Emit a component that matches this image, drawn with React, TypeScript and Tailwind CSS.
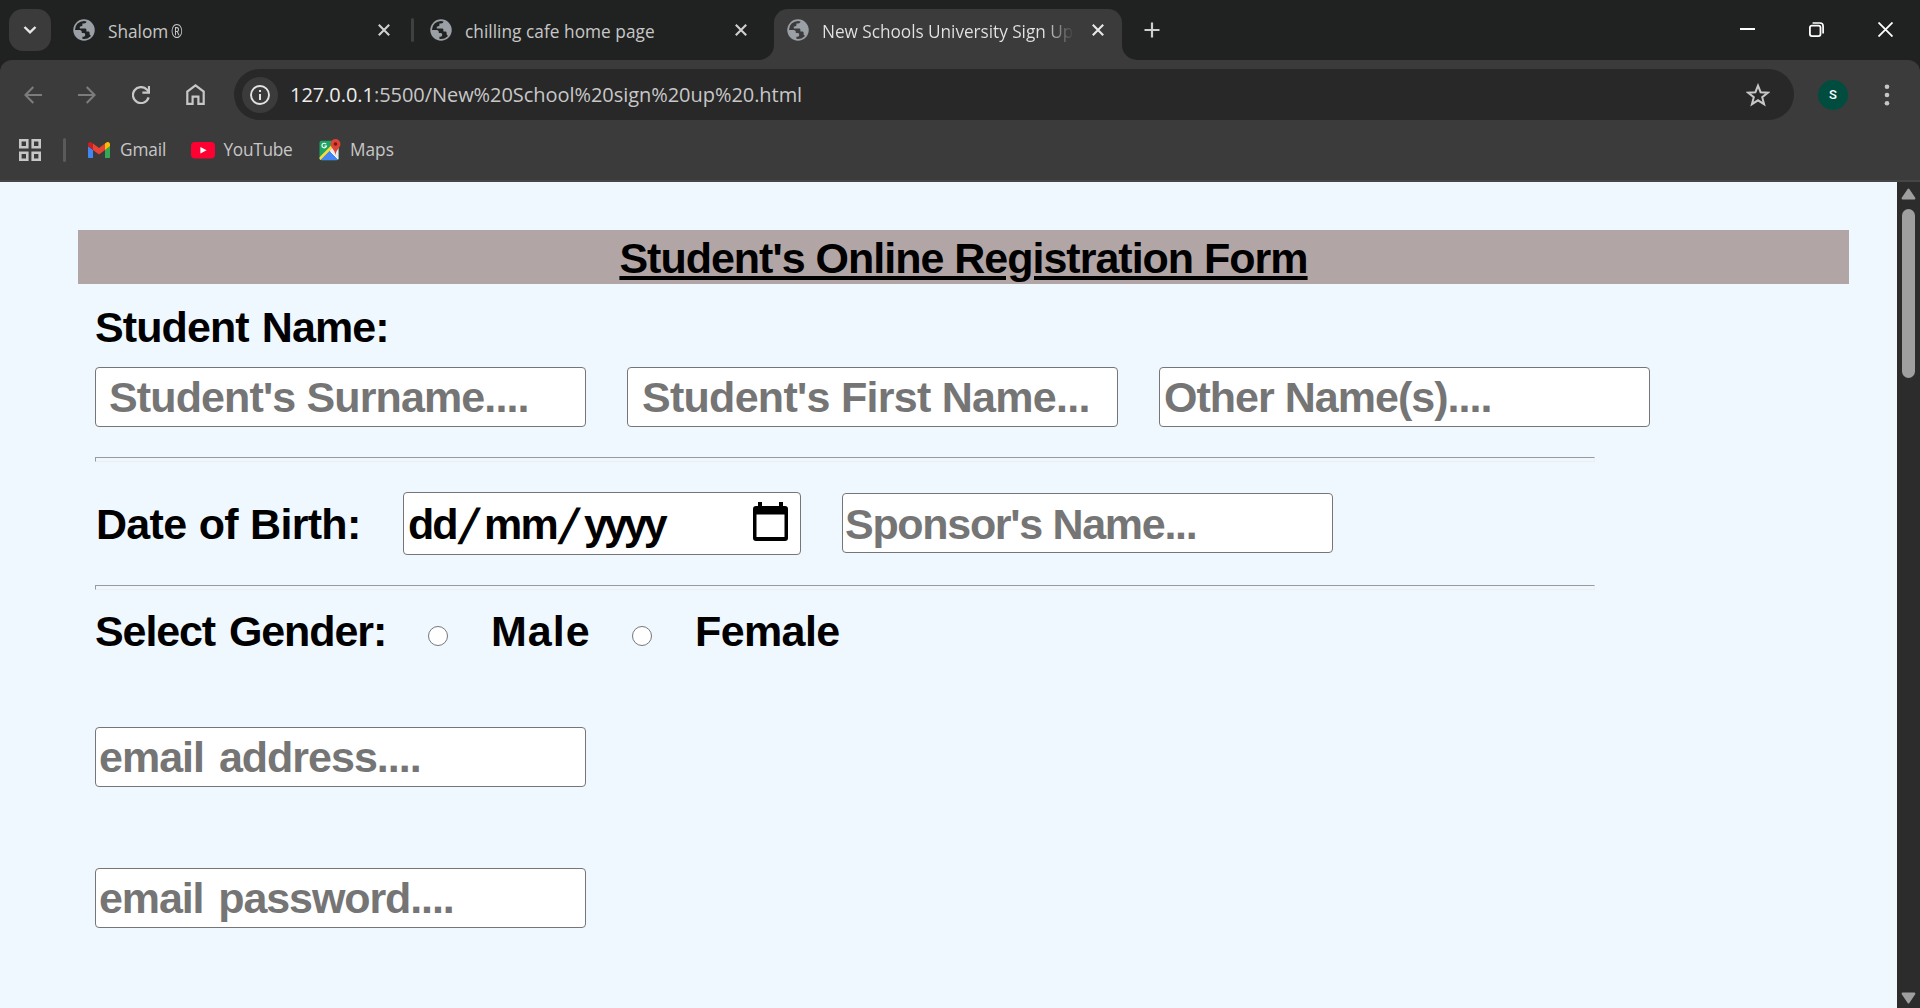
import type { ReactNode } from "react";

const FORM_FONT = "font-['Liberation_Sans',Arial,sans-serif] font-bold text-[43px]";
const INPUT =
  "block h-[60px] w-[491px] shrink-0 rounded-[4px] border border-[#767676] bg-white p-0 outline-none placeholder:text-[#757575] placeholder:opacity-100 " +
  FORM_FONT;

function Globe() {
  return (
    <svg viewBox="0 0 22 22" className="size-[22px] shrink-0">
      <circle cx="11" cy="11" r="9.9" fill="none" stroke="#9aa0a6" strokeWidth="1.7" />
      <path
        fill="#9aa0a6"
        d="M13.6 1.6C13.8 3.6 12.6 4.4 11 4.4H9.4V6.2C9.4 7 8.8 7.4 8 7.4H6.8V9.4H12C13 9.4 13.4 10 13.4 10.8V12.6H15.2C16.2 12.6 16.6 13.2 16.6 14V15.6L18.6 17.4C20.2 15.6 20.9 13.4 20.9 11C20.9 6.4 17.8 2.6 13.6 1.6Z"
      />
      <path fill="#9aa0a6" d="M1.2 11H6.6C8.2 11 8.8 12 8.8 13.2V14H10.6C11.8 14 12.2 14.8 12.2 15.8C12.2 17.2 11.4 17.8 10 17.8H9.4V20.6C4.6 20 1.2 15.8 1.2 11Z" />
    </svg>
  );
}

function CloseGlyph({ color = "#d0d0d0" }: { color?: string }) {
  return (
    <svg viewBox="0 0 12 12" className="size-[12px] shrink-0">
      <path d="M0.8 0.8L11.2 11.2M11.2 0.8L0.8 11.2" stroke={color} strokeWidth="2.1" />
    </svg>
  );
}

function TabStrip() {
  return (
    <div className="flex h-[60px] items-start bg-[#202221] pl-[9px]">
      <button className="mt-[9px] flex size-[42px] shrink-0 items-center justify-center rounded-[14px] bg-[#3b3b3b]">
        <svg viewBox="0 0 14 10" className="h-[10px] w-[14px]">
          <path d="M1.5 2L7 7.4L12.5 2" fill="none" stroke="#e8e8e8" strokeWidth="2.4" />
        </svg>
      </button>

      <div className="mt-[9px] flex h-[42px] w-[363px] items-center pl-[22px]">
        <Globe />
        <span className="ml-[13px] flex-1 pt-[3px] text-[17.25px] text-[#c7c7c7]">
          Shalom<span className="ml-[3px] inline-block w-[11px] origin-left scale-x-[.82]">®</span>
        </span>
        <CloseGlyph />
        <span className="ml-[21px] h-[24px] w-[3px] rounded-sm bg-[#3f4040]" />
      </div>

      <div className="mt-[9px] flex h-[42px] w-[360px] items-center pl-[16px]">
        <Globe />
        <span className="ml-[13px] flex-1 pt-[3px] text-[17.25px] tracking-[0.04px] text-[#c7c7c7]">chilling cafe home page</span>
        <CloseGlyph />
        <span className="w-[27px]" />
      </div>

      <div className="relative mt-[9px] h-[51px] w-[348px] shrink-0 rounded-t-[14px] bg-[#3b3b3b]">
        <svg viewBox="0 0 15 15" className="absolute bottom-0 -left-[15px] size-[15px]">
          <path d="M15 0V15H0A15 15 0 0 0 15 0Z" fill="#3b3b3b" />
        </svg>
        <svg viewBox="0 0 15 15" className="absolute -right-[15px] bottom-0 size-[15px]">
          <path d="M0 0V15H15A15 15 0 0 1 0 0Z" fill="#3b3b3b" />
        </svg>
        <div className="flex h-[42px] items-center pl-[13px]">
          <Globe />
          <span className="ml-[13px] w-[252px] overflow-hidden bg-linear-to-r from-[#e3e3e3] from-[88%] to-transparent bg-clip-text pt-[3px] text-[17.25px] tracking-[-0.05px] whitespace-nowrap text-transparent">
            New Schools University Sign Up
          </span>
          <span className="ml-[18px] flex">
            <CloseGlyph color="#e8e8e8" />
          </span>
        </div>
      </div>

      <svg viewBox="0 0 16 16" className="mt-[22px] ml-[22px] size-[16px] shrink-0">
        <path d="M8 0.5V15.5M0.5 8H15.5" stroke="#cfcfcf" strokeWidth="2.2" />
      </svg>

      <div className="mt-[22px] mr-[27px] ml-auto flex gap-[54px]">
        <svg viewBox="0 0 15 15" className="size-[15px]">
          <path d="M0 7H15" stroke="#fff" strokeWidth="2" />
        </svg>
        <svg viewBox="0 0 15 15" className="size-[15px]">
          <rect x="0.9" y="3.6" width="10.6" height="10.5" rx="2" fill="none" stroke="#fff" strokeWidth="1.8" />
          <path d="M3.6 1H11A3.2 3.2 0 0 1 14.1 4.2V11.4" fill="none" stroke="#fff" strokeWidth="1.7" />
        </svg>
        <svg viewBox="0 0 15 15" className="size-[15px]">
          <path d="M0.5 0.5L14.5 14.5M14.5 0.5L0.5 14.5" stroke="#fff" strokeWidth="1.8" />
        </svg>
      </div>
    </div>
  );
}

function AddressBar() {
  return (
    <div className="flex h-[69px] items-center pl-[24px]">
      <svg viewBox="0 0 18 18" className="size-[18px]" fill="none" stroke="#7c7c7c" strokeWidth="2.1">
        <path d="M18 9H1.6M9.3 0.9L1.4 9L9.3 17.1" />
      </svg>
      <svg viewBox="0 0 18 18" className="ml-[36px] size-[18px]" fill="none" stroke="#7c7c7c" strokeWidth="2.1">
        <path d="M0 9H16.4M8.7 0.9L16.6 9L8.7 17.1" />
      </svg>
      <svg viewBox="0 0 18 18" className="ml-[36px] size-[18px]" fill="none" stroke="#c7c7c7" strokeWidth="2.2">
        <path d="M16.6 11.4A8 8 0 1 1 14.8 3.6L16.6 5.6" />
        <path d="M17 0V6.6H10.4" />
      </svg>
      <svg viewBox="0 0 19 21" className="ml-[35.5px] h-[21px] w-[19px]" fill="none" stroke="#c7c7c7" strokeWidth="2.2">
        <path d="M1.3 19.8V7.6L9.5 1.4L17.7 7.6V19.8H12.4V12.6H6.6V19.8Z" />
      </svg>

      <div className="ml-[29.5px] flex h-[51px] w-[1560px] items-center rounded-full bg-[#282828] pl-[8px]">
        <span className="flex size-[36px] items-center justify-center rounded-full bg-[#3b3b3b]">
          <svg viewBox="0 0 20 20" className="size-[20px]" fill="none" stroke="#e3e3e3" strokeWidth="1.9">
            <circle cx="10" cy="10" r="9" />
            <path d="M10 9V15M10 5V7.1" strokeWidth="2" />
          </svg>
        </span>
        <span className="ml-[12px] text-[20px] tracking-[-0.05px] whitespace-nowrap text-[#c7c7c7]">
          <span className="text-[#ededed]">127.0.0.1</span>:5500/New%20School%20sign%20up%20.html
        </span>
        <svg viewBox="0 0 24 24" className="mr-[24px] ml-auto size-[24px]">
          <path
            d="M12 2.6L14.6 9.2L21.8 9.7L16.2 14.2L18.1 21.2L12 17.3L5.9 21.2L7.8 14.2L2.2 9.7L9.4 9.2Z"
            fill="none"
            stroke="#c7c7c7"
            strokeWidth="2"
          />
        </svg>
      </div>

      <span className="ml-[24px] flex size-[30px] items-center justify-center rounded-full bg-[#004d40] font-[Roboto,sans-serif] text-[13px] font-medium text-white">
        S
      </span>
      <svg viewBox="0 0 6 22" className="ml-[36px] h-[22px] w-[6px]" fill="#c7c7c7">
        <circle cx="3" cy="2.8" r="2.3" />
        <circle cx="3" cy="11" r="2.3" />
        <circle cx="3" cy="19.2" r="2.3" />
      </svg>
    </div>
  );
}

function BookmarksBar() {
  return (
    <div className="flex h-[42px] items-center pl-[19px] text-[17.25px] text-[#c7c7c7]">
      <svg viewBox="0 0 22 22" className="size-[22px]" fill="none" stroke="#c7c7c7" strokeWidth="2.6">
        <path d="M1.3 1.3H8.3V8.3H1.3ZM13.7 1.3H20.7V8.3H13.7ZM1.3 13.7H8.3V20.7H1.3ZM13.7 13.7H20.7V20.7H13.7Z" />
      </svg>
      <span className="ml-[22px] h-[24px] w-[3px] rounded-sm bg-[#5a5a5a]" />
      <svg viewBox="52 42 88 66" className="ml-[22px] h-[16.5px] w-[22px]">
        <path fill="#4285f4" d="M58 108h14V74L52 59v43c0 3.32 2.69 6 6 6" />
        <path fill="#34a853" d="M120 108h14c3.32 0 6-2.69 6-6V59l-20 15" />
        <path fill="#fbbc04" d="M120 48v26l20-15v-8c0-7.42-8.47-11.65-14.4-7.2" />
        <path fill="#ea4335" d="M72 74V48l24 18 24-18v26L96 92" />
        <path fill="#c5221f" d="M52 51v8l20 15V48l-5.6-4.2c-5.94-4.45-14.4-.22-14.4 7.2" />
      </svg>
      <span className="ml-[10px] w-[46px] tracking-[-0.1px]">Gmail</span>
      <svg viewBox="0 0 24 17" className="ml-[25px] h-[17px] w-[24px] shrink-0">
        <rect width="24" height="16.5" rx="4" fill="#ff0033" />
        <path d="M9.4 5L15.6 8.3L9.4 11.6Z" fill="#fff" />
      </svg>
      <span className="ml-[8.5px] w-[70.5px] tracking-[-0.3px]">YouTube</span>
      <svg viewBox="0 0 22 22" className="ml-[25px] size-[22px] shrink-0">
        <clipPath id="mapTile">
          <rect x="0.5" y="1.8" width="19" height="19.5" rx="2" />
        </clipPath>
        <g clipPath="url(#mapTile)">
          <rect y="1" width="20" height="21" fill="#1da462" />
          <path d="M10.5 11.5L20 21.5H1Z" fill="#4285f4" />
          <path d="M12 10L20 4V21.5L10.5 11.5Z" fill="#e8eaed" />
          <path d="M0 20.5L14.5 6" stroke="#ffd93b" strokeWidth="2.6" />
          <path d="M11.5 12.5L20 21" stroke="#fff" strokeWidth="1" />
        </g>
        <path d="M7.2 5.3A2.3 2.3 0 1 0 7.5 7H5.4" fill="none" stroke="#fff" strokeWidth="1.1" />
        <path d="M16.5 0A4.9 4.9 0 0 0 11.6 5C11.6 9 15.6 10 16.5 16C17.4 10 21.4 9 21.4 5A4.9 4.9 0 0 0 16.5 0Z" fill="#db4437" />
        <circle cx="16.5" cy="5" r="1.8" fill="#811411" />
      </svg>
      <span className="ml-[9px]">Maps</span>
    </div>
  );
}

function Divider({ className }: { className: string }) {
  return (
    <div
      className={
        "h-[5px] w-[1500px] border border-t-[#9a9a9a] border-r-[#eeeeee] border-b-[#eeeeee] border-l-[#9a9a9a] " + className
      }
    />
  );
}

function Label({ className, children }: { className: string; children: ReactNode }) {
  return <label className={"block whitespace-nowrap leading-[60px] text-black " + FORM_FONT + " " + className}>{children}</label>;
}

function Radio({ className }: { className: string }) {
  return <input type="radio" name="gender" className={"size-[20px] shrink-0 appearance-none rounded-full border-[1.5px] border-[#767676] bg-white " + className} />;
}

function RegistrationForm() {
  return (
    <main className="flex-1 bg-[#eff7ff] pt-[48px] pl-[78px]">
      <h1
        className={
          "h-[54px] w-[1771px] bg-[#b2a5a5] text-center leading-[57px] tracking-[-1px] text-black underline decoration-[4px] underline-offset-[3px] " +
          FORM_FONT
        }
      >
        Student's Online Registration Form
      </h1>
      <form className="pl-[17px]">
        <Label className="mt-[13px] tracking-[-0.9px] [word-spacing:2px]">Student Name:</Label>
        <div className="mt-[10px] flex gap-[41px]">
          <input className={INPUT + " pl-[13px] tracking-[-0.87px]"} placeholder="Student's Surname...." />
          <input className={INPUT + " pl-[14px] tracking-[-0.72px]"} placeholder="Student's First Name..." />
          <input className={INPUT + " pl-[4px] tracking-[-0.98px]"} placeholder="Other Name(s)...." />
        </div>
        <Divider className="mt-[30px]" />

        <div className="mt-[30px] flex h-[63px] items-start">
          <Label className="mt-[2px] w-[308px] pl-px tracking-[-0.7px] [word-spacing:1px]">Date of Birth:</Label>
          <div className={"flex h-[63px] w-[398px] items-center rounded-[4px] border border-[#767676] bg-white pl-[4px] leading-[60px] text-black " + FORM_FONT}>
            <span className="w-[50px] tracking-[-2px]">dd</span>
            <span className="inline-block w-[12px] translate-x-[5px] translate-y-[2px] -skew-x-[17deg] scale-y-[1.12] font-normal [-webkit-text-stroke:1.2px_black]">/</span>
            <span className="ml-[14px] w-[75px] tracking-[-1.8px]">mm</span>
            <span className="inline-block w-[12px] translate-x-[4px] translate-y-[2px] -skew-x-[17deg] scale-y-[1.12] font-normal [-webkit-text-stroke:1.2px_black]">/</span>
            <span className="ml-[13px] w-[90px] tracking-[-4px]">yyyy</span>
            <svg viewBox="0 0 35 39" className="mr-[12px] ml-auto h-[39px] w-[35px] -translate-y-[2px]">
              <path d="M5 0H9V4H26V0H30V4H32A3 3 0 0 1 35 7V36A3 3 0 0 1 32 39H3A3 3 0 0 1 0 36V7A3 3 0 0 1 3 4H5ZM3.5 12.5V35H31.5V12.5Z" fill="#000" fillRule="evenodd" />
            </svg>
          </div>
          <input className={INPUT + " mt-px ml-[41px] pt-[2px] pl-[2px] tracking-[-1.3px]"} placeholder="Sponsor's Name..." />
        </div>
        <Divider className="mt-[30px]" />

        <div className="mt-[11px] flex h-[60px] items-start">
          <Label className="w-[333px] tracking-[-1.1px] [word-spacing:3px]">Select Gender:</Label>
          <Radio className="mt-[25px]" />
          <Label className="ml-[43px] w-[141px] tracking-[1px]">Male</Label>
          <Radio className="mt-[25px]" />
          <Label className="ml-[43px] tracking-[-0.6px]">Female</Label>
        </div>

        <input className={INPUT + " mt-[66px] pl-[3px] tracking-[-1px] [word-spacing:4px]"} placeholder="email address...." />
        <input className={INPUT + " mt-[81px] pl-[3px] tracking-[-1.1px] [word-spacing:4px]"} placeholder="email password...." />
      </form>
    </main>
  );
}

function Scrollbar() {
  return (
    <div className="flex w-[23px] shrink-0 flex-col items-center bg-[#2c2c2c] pt-[6px] pb-[4px]">
      <svg viewBox="0 0 15 12" className="h-[12px] w-[15px]">
        <path d="M7.5 1.6L13.4 10.4H1.6Z" fill="#9f9f9f" stroke="#9f9f9f" strokeWidth="2" strokeLinejoin="round" />
      </svg>
      <div className="mt-[9px] h-[169px] w-[13px] rounded-full bg-[#9f9f9f]" />
      <svg viewBox="0 0 15 12" className="mt-auto h-[12px] w-[15px]">
        <path d="M7.5 10.4L13.4 1.6H1.6Z" fill="#9f9f9f" stroke="#9f9f9f" strokeWidth="2" strokeLinejoin="round" />
      </svg>
    </div>
  );
}

export default function App() {
  return (
    <div className="flex h-[1008px] w-[1920px] flex-col overflow-hidden bg-[#202221] font-['Open_Sans','Noto_Sans',sans-serif]">
      <TabStrip />
      <div className="h-[122px] shrink-0 rounded-t-[12px] border-b-2 border-[#464646] bg-[#3b3b3b]">
        <AddressBar />
        <BookmarksBar />
      </div>
      <div className="flex min-h-0 flex-1">
        <RegistrationForm />
        <Scrollbar />
      </div>
    </div>
  );
}
